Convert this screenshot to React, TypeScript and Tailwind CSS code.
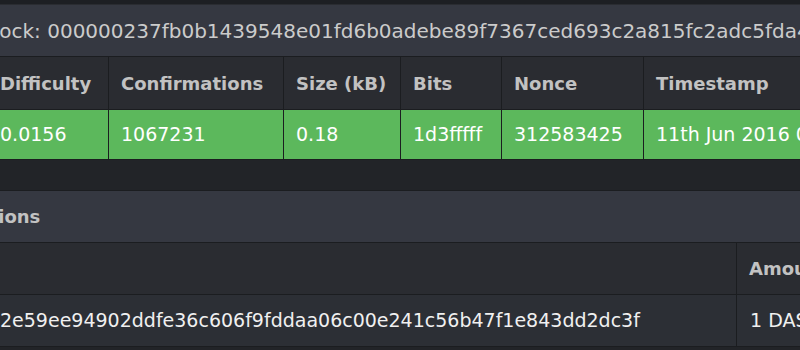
const font = "font-['DejaVu_Sans',sans-serif]";

const blockCols = [
  { label: "Difficulty", value: "0.0156", w: "w-[120px]" },
  { label: "Confirmations", value: "1067231", w: "w-[175px]" },
  { label: "Size (kB)", value: "0.18", w: "w-[117px]" },
  { label: "Bits", value: "1d3fffff", w: "w-[101px]" },
  { label: "Nonce", value: "312583425", w: "w-[142px]" },
  { label: "Timestamp", value: "11th Jun 2016 03:22:41", w: "w-[200px]" },
];

export default function App() {
  return (
    <div className={`w-[800px] h-[350px] overflow-hidden bg-[#222428] ${font}`}>
      <div className="h-[5px] bg-[#1d1f23] border-b border-[#2a2c31]" />

      {/* Block panel */}
      <div className="flex flex-col">
        <div className="h-[52px] flex items-center bg-[#353841] border-b border-[#1b1d20] whitespace-nowrap">
          <span className="-ml-[20px] text-[20px] text-[#cbcbcb]">
            Block: 000000237fb0b1439548e01fd6b0adebe89f7367ced693c2a815fc2adc5fda4
          </span>
        </div>
        <div className="flex -ml-[12px] h-[53px] bg-[#2a2c31] border-b border-[#1b1d20]">
          {blockCols.map((c, i) => (
            <div
              key={c.label}
              className={`${c.w} shrink-0 flex items-center px-[12px] whitespace-nowrap text-[18px] font-bold text-[#c2c2c2] ${i > 0 ? "border-l border-[#1b1d20]" : ""}`}
            >
              {c.label}
            </div>
          ))}
        </div>
        <div className="flex -ml-[12px] h-[50px] bg-[#5cb85c] border-b border-[#1b1d20]">
          {blockCols.map((c, i) => (
            <div
              key={c.label}
              className={`${c.w} shrink-0 flex items-center px-[12px] whitespace-nowrap text-[19px] text-white ${i > 0 ? "border-l border-[#1b1d20]" : ""}`}
            >
              {c.value}
            </div>
          ))}
        </div>
      </div>

      <div className="h-[30px]" />

      {/* Transactions panel */}
      <div className="flex flex-col border-t border-[#1b1d20]">
        <div className="h-[52px] flex items-center bg-[#353841] border-b border-[#1b1d20] whitespace-nowrap">
          <span className="-ml-[88px] text-[18px] font-bold text-[#c2c2c2]">Transactions</span>
        </div>
        <div className="flex h-[52px] bg-[#2a2c31] border-b border-[#1b1d20]">
          <div className="w-[736px] shrink-0" />
          <div className="flex-1 flex items-center px-[12px] border-l border-[#1b1d20] whitespace-nowrap text-[18px] font-bold text-[#c2c2c2]">
            Amount
          </div>
        </div>
        <div className="flex h-[52px] bg-[#2c2f35] border-b border-[#1b1d20]">
          <div className="w-[736px] shrink-0 flex items-center whitespace-nowrap text-[19px] text-[#f0f0f0]">
            2e59ee94902ddfe36c606f9fddaa06c00e241c56b47f1e843dd2dc3f
          </div>
          <div className="flex-1 flex items-center px-[13px] border-l border-[#1b1d20] whitespace-nowrap text-[19px] text-[#f0f0f0]">
            1 DASH
          </div>
        </div>
      </div>
    </div>
  );
}
